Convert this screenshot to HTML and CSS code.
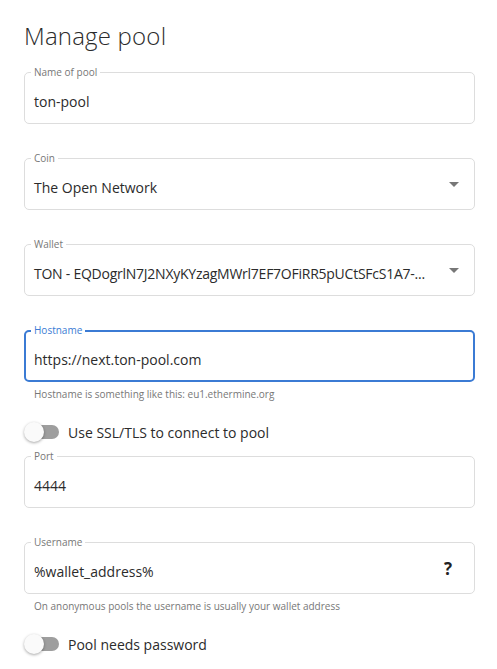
FILE: index.html
```html
<!DOCTYPE html>
<html>
<head>
<meta charset="utf-8">
<link rel="stylesheet" href="styles.css">
</head>
<body>
<div class="page">
  <h1 class="title">Manage pool</h1>

  <div class="field">
    <div class="box"><span class="label">Name of pool</span><span class="value">ton-pool</span></div>
  </div>

  <div class="field">
    <div class="box select"><span class="label">Coin</span><span class="value">The Open Network</span><span class="caret"></span></div>
  </div>

  <div class="field">
    <div class="box select"><span class="label">Wallet</span><span class="value tight">TON - EQDogrlN7J2NXyKYzagMWrl7EF7OFiRR5pUCtSFcS1A7-...</span><span class="caret"></span></div>
  </div>

  <div class="field with-help">
    <div class="box focused"><span class="label">Hostname</span><span class="value">https://next.ton-pool.com</span></div>
    <div class="help">Hostname is something like this: eu1.ethermine.org</div>
  </div>

  <div class="switch-row">
    <span class="switch"><span class="track"></span><span class="knob"></span></span>
    <span class="switch-label">Use SSL/TLS to connect to pool</span>
  </div>

  <div class="field">
    <div class="box"><span class="label">Port</span><span class="value">4444</span></div>
  </div>

  <div class="field with-help">
    <div class="box"><span class="label">Username</span><span class="value">%wallet_address%</span><span class="qmark">?</span></div>
    <div class="help">On anonymous pools the username is usually your wallet address</div>
  </div>

  <div class="switch-row">
    <span class="switch"><span class="track"></span><span class="knob"></span></span>
    <span class="switch-label">Pool needs password</span>
  </div>
</div>
</body>
</html>
```

FILE: styles.css
```css
* { box-sizing: border-box; }
html, body { margin: 0; padding: 0; background: #fff; }
body {
  font-family: "Open Sans", "Noto Sans", sans-serif;
  color: #2b2b2b;
}
.page {
  padding: 20px 22px 0 24px;
}
.title {
  margin: 0 0 20px 0;
  font-size: 24px;
  font-weight: 300;
  line-height: 32px;
  color: #2b2b2b;
  letter-spacing: 0.2px;
}
.field {
  margin-bottom: 35px;
}
.field.with-help {
  margin-bottom: 0;
}
.box {
  position: relative;
  height: 52px;
  border: 1px solid #ddd;
  border-radius: 5px;
  display: flex;
  align-items: center;
  padding: 7px 10px 0 9px;
}
.field + .field { margin-top: -1px; }
.box.focused {
  border: 2px solid #3b7bd4;
  padding-left: 8px;
}
.label {
  position: absolute;
  top: -8px;
  left: 6px;
  padding: 0 3px;
  background: #fff;
  font-size: 10px;
  line-height: 14px;
  color: #777;
}
.box.focused .label {
  color: #3b7bd4;
  left: 5px;
  top: -9px;
}
.value {
  flex: 1;
  min-width: 0;
  font-size: 14px;
  color: #2b2b2b;
  white-space: nowrap;
}
.value.tight {
  letter-spacing: -0.25px;
}
.select .value {
  padding-right: 8px;
}
.caret {
  width: 0;
  height: 0;
  border-left: 5px solid transparent;
  border-right: 5px solid transparent;
  border-top: 5px solid #777;
  margin-right: 5px;
  margin-top: -6px;
}
.qmark {
  font-size: 17px;
  font-weight: 700;
  color: #222;
  margin-right: 12px;
  margin-top: -6px;
}
.help {
  font-size: 10px;
  line-height: 14px;
  color: #777;
  padding: 5px 0 0 10px;
}
.switch-row {
  display: flex;
  align-items: center;
  height: 24px;
  margin: 19px 0 12px 0;
}
.switch {
  position: relative;
  width: 36px;
  height: 20px;
  margin-right: 8px;
}
.track {
  position: absolute;
  left: 8px;
  top: 3px;
  width: 27px;
  height: 14px;
  border-radius: 7px;
  background: #9e9e9e;
}
.knob {
  position: absolute;
  left: 0;
  top: 0;
  width: 20px;
  height: 20px;
  border-radius: 50%;
  background: #fafafa;
  box-shadow: 0 1px 3px rgba(0,0,0,0.35);
}
.switch-label {
  font-size: 14px;
  color: #2b2b2b;
}
```
